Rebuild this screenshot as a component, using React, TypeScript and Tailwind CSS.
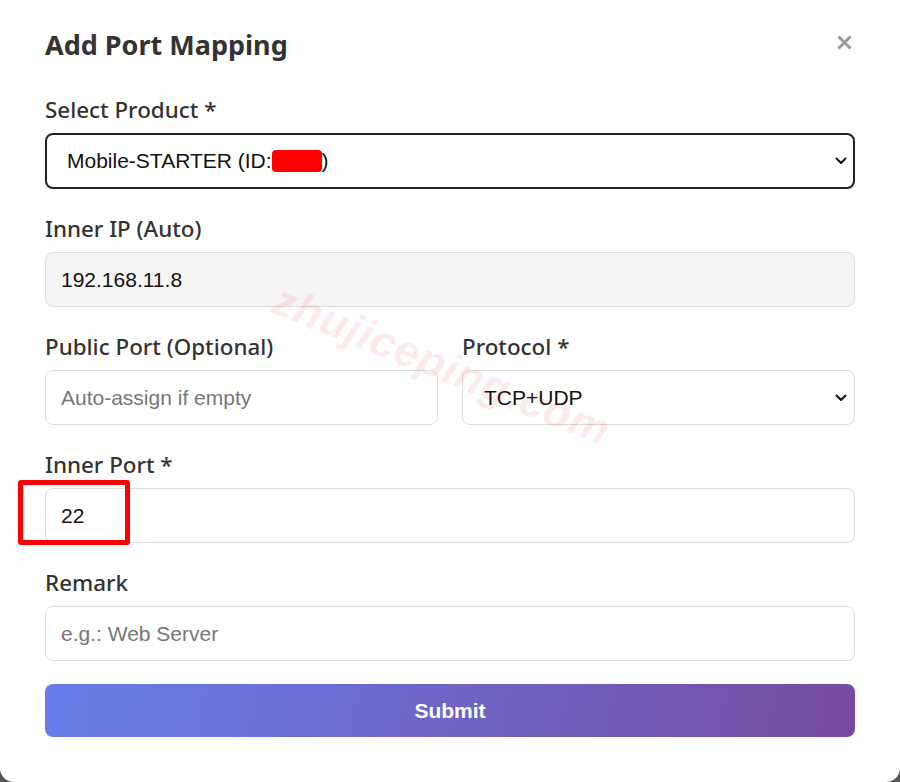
import { useState } from "react";

const labelCls =
  "block text-[22.4px] leading-[30px] mb-2 text-[#333] font-medium font-['Noto_Sans',sans-serif]";
const inputBase =
  "w-full h-[55px] px-[15px] text-[21px] text-[#111] border border-[#dddddd] rounded-[8px] placeholder-[#777] outline-none font-['Liberation_Sans',Arial,sans-serif]";
const inputCls = inputBase + " bg-white";

function Chevron() {
  return (
    <svg
      className="pointer-events-none absolute right-[8px] top-1/2 -translate-y-1/2 w-[12px] h-[8px]"
      viewBox="0 0 12 8"
      fill="none"
      stroke="#111"
      strokeWidth={2}
      strokeLinecap="round"
      strokeLinejoin="round"
    >
      <path d="M1.5 1.5 6 6l4.5-4.5" />
    </svg>
  );
}

export default function App() {
  const [publicPort, setPublicPort] = useState("");
  const [innerPort, setInnerPort] = useState("22");
  const [remark, setRemark] = useState("");

  return (
    <div className="w-[900px] h-[782px] bg-[#555] overflow-hidden">
      <div className="relative h-[782px] bg-white rounded-b-[14px] px-[45px] pt-[27px]">
        {/* Header */}
        <div className="flex items-center justify-between h-[36px] mb-[32px]">
          <h2 className="text-[27px] leading-[36px] font-bold text-[#333] font-['Noto_Sans',sans-serif]">
            Add Port Mapping
          </h2>
          <button className="mr-[1px] -mt-[6px] p-[2px]">
            <svg className="w-[15px] h-[15px]" viewBox="0 0 15 15" fill="none" stroke="#999" strokeWidth={3}>
              <path d="M1.5 1.5l12 12M13.5 1.5l-12 12" />
            </svg>
          </button>
        </div>

        <div className="space-y-[25px]">
          {/* Select Product */}
          <div>
            <label className={labelCls}>Select Product *</label>
            <div className="relative">
              <div className="w-full h-[56px] pl-[20px] flex items-center text-[21px] text-[#111] bg-white border-2 border-[#222] rounded-[8px] font-['Liberation_Sans',Arial,sans-serif]">
                Mobile-STARTER (ID:
                <span className="inline-block w-[50px] h-[22px] bg-[#ff0000] rounded-[4px]" />)
              </div>
              <Chevron />
            </div>
          </div>

          {/* Inner IP */}
          <div>
            <label className={labelCls}>Inner IP (Auto)</label>
            <input className={inputBase + " bg-[#f5f5f5]"} value="192.168.11.8" readOnly />
          </div>

          {/* Public Port + Protocol */}
          <div className="grid grid-cols-2 gap-[24px]">
            <div>
              <label className={labelCls}>Public Port (Optional)</label>
              <input
                className={inputCls}
                placeholder="Auto-assign if empty"
                value={publicPort}
                onChange={(e) => setPublicPort(e.target.value)}
              />
            </div>
            <div>
              <label className={labelCls}>Protocol *</label>
              <div className="relative">
                <select className={inputCls + " appearance-none pl-[21px]"} defaultValue="both">
                  <option value="both">TCP+UDP</option>
                  <option value="tcp">TCP</option>
                  <option value="udp">UDP</option>
                </select>
                <Chevron />
              </div>
            </div>
          </div>

          {/* Inner Port */}
          <div>
            <label className={labelCls}>Inner Port *</label>
            <input
              className={inputCls}
              value={innerPort}
              onChange={(e) => setInnerPort(e.target.value)}
            />
          </div>

          {/* Remark */}
          <div>
            <label className={labelCls}>Remark</label>
            <input
              className={inputCls}
              placeholder="e.g.: Web Server"
              value={remark}
              onChange={(e) => setRemark(e.target.value)}
            />
          </div>
        </div>

        <button className="mt-[23px] w-full h-[53px] rounded-[8px] bg-[linear-gradient(100deg,#667eea_0%,#764ba2_100%)] text-white text-[21px] font-bold font-['Liberation_Sans',Arial,sans-serif]">
          Submit
        </button>

        {/* annotation box */}
        <div className="absolute left-[18px] top-[480px] w-[112px] h-[65px] border-[5px] border-[#ff0000] rounded-[3px] pointer-events-none" />

        {/* watermark */}
        <div className="absolute left-[262px] top-[332px] rotate-[22deg] text-[44px] font-bold italic tracking-[1px] text-[rgba(240,40,40,0.1)] pointer-events-none select-none font-['Liberation_Sans',Arial,sans-serif]">
          zhujiceping.com
        </div>
      </div>
    </div>
  );
}
